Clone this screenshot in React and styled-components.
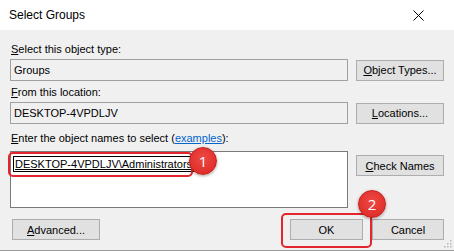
import React from "react";
import styled, { createGlobalStyle } from "styled-components";

const Global = createGlobalStyle`
  html, body { margin: 0; padding: 0; background: #f0f0f0; }
  body { font-family: "Liberation Sans", Arial, sans-serif; font-size: 11px; color: #000; }
  * { box-sizing: border-box; }
`;

const Window = styled.div`
  position: relative;
  width: 454px;
  height: 251px;
  background: #f0f0f0;
  overflow: hidden;
  border-bottom: 1px solid #9a9a9a;
`;

const TitleBar = styled.div`
  height: 30px;
  background: #fff;
  display: flex;
  align-items: center;
  justify-content: space-between;
  padding: 0 30px 0 9px;
  font-size: 12px;
`;

const Body = styled.div`
  display: flex;
  flex-direction: column;
  padding: 0 10px;
`;

const Label = styled.div`
  margin-top: ${(p) => p.$mt}px;
  height: 14px;
  line-height: 14px;
  padding-left: 1px;
`;

const U = styled.span`
  text-decoration: underline;
  text-underline-offset: 1px;
`;

const Link = styled.span`
  color: #0066cc;
`;

const Row = styled.div`
  display: flex;
  gap: 8px;
  align-items: ${(p) => p.$align || "center"};
  margin-top: ${(p) => p.$mt}px;
`;

const Field = styled.div`
  width: 338px;
  height: ${(p) => p.$h || 22}px;
  border: 1px solid ${(p) => (p.$white ? "#7a7a7a" : "#a0a0a0")};
  background: ${(p) => (p.$white ? "#fff" : "#f0f0f0")};
  padding: ${(p) => (p.$white ? "4px 2px" : "3px 3px")};
  line-height: 14px;
`;

const Button = styled.div`
  width: ${(p) => p.$w || 88}px;
  height: 21px;
  border: 1px solid #adadad;
  background: #e1e1e1;
  display: flex;
  align-items: center;
  justify-content: center;
  margin-top: ${(p) => p.$mt || 0}px;
`;

const Footer = styled.div`
  display: flex;
  align-items: center;
  margin-top: 11px;
  padding: 0 0 0 2px;
`;

const Spacer = styled.div`
  flex: ${(p) => (p.$fixed ? `0 0 ${p.$fixed}px` : 1)};
`;

const Name = styled.span`
  display: inline-block;
  border: 1px solid #000;
  padding: 0 1px;
  line-height: 14px;
  text-decoration: underline;
  text-underline-offset: 1px;
`;

const Highlight = styled.div`
  position: absolute;
  border: 2px solid #e3262b;
  border-radius: 5px;
  left: ${(p) => p.$x}px;
  top: ${(p) => p.$y}px;
  width: ${(p) => p.$w}px;
  height: ${(p) => p.$h}px;
`;

const Badge = styled.div`
  position: absolute;
  left: ${(p) => p.$x - 14}px;
  top: ${(p) => p.$y - 14}px;
  width: 28px;
  height: 28px;
  border-radius: 50%;
  background: radial-gradient(circle at 50% 40%, #ee4a45 0%, #e0302c 70%, #c4201d 100%);
  border: 1px solid #c61f1c;
  box-shadow: 0 1px 3px rgba(0, 0, 0, 0.35);
  color: #fff;
  font-family: "Open Sans", "Liberation Sans", sans-serif;
  font-size: 15px;
  display: flex;
  align-items: center;
  justify-content: center;
`;

const Grip = styled.svg`
  position: absolute;
  right: 2px;
  bottom: 2px;
`;

export default function App() {
  return (
    <>
      <Global />
      <Window>
        <TitleBar>
          <span>Select Groups</span>
          <svg width="11" height="11" viewBox="0 0 11 11">
            <path d="M0.5 0.5 L10.5 10.5 M10.5 0.5 L0.5 10.5" stroke="#000" strokeWidth="1" />
          </svg>
        </TitleBar>
        <Body>
          <Label $mt={12}>
            <U>S</U>elect this object type:
          </Label>
          <Row $mt={3}>
            <Field>Groups</Field>
            <Button>
              <span><U>O</U>bject Types...</span>
            </Button>
          </Row>
          <Label $mt={4}>
            <U>F</U>rom this location:
          </Label>
          <Row $mt={3}>
            <Field>DESKTOP-4VPDLJV</Field>
            <Button>
              <span><U>L</U>ocations...</span>
            </Button>
          </Row>
          <Label $mt={7}>
            <U>E</U>nter the object names to select (<Link><U>examples</U></Link>):
          </Label>
          <Row $mt={6} $align="flex-start">
            <Field $white $h={57}>
              <Name>DESKTOP-4VPDLJV\Administrators</Name>
            </Field>
            <Button $mt={4}>
              <span><U>C</U>heck Names</span>
            </Button>
          </Row>
          <Footer>
            <Button>
              <span><U>A</U>dvanced...</span>
            </Button>
            <Spacer />
            <Button $w={73}>OK</Button>
            <Spacer $fixed={9} />
            <Button $w={72}>Cancel</Button>
          </Footer>
        </Body>
        <Highlight $x={8} $y={152} $w={185} $h={25} />
        <Highlight $x={281} $y={213} $w={91} $h={35} />
        <Badge $x={203} $y={161}>1</Badge>
        <Badge $x={372} $y={204}>2</Badge>
        <Grip width="10" height="10" viewBox="0 0 10 10">
          {[[8, 2], [8, 5], [5, 5], [8, 8], [5, 8], [2, 8]].map(([x, y], i) => (
            <rect key={i} x={x} y={y} width="1.5" height="1.5" fill="#b8b8b8" />
          ))}
        </Grip>
      </Window>
    </>
  );
}
